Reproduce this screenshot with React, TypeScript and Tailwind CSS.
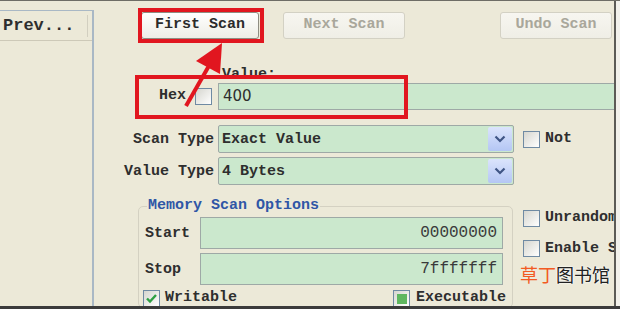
import React from 'react';

// Cheat-engine style scan panel, with the red tutorial marks on top

const mono = "font-['Liberation_Mono',monospace] font-bold";

interface CheckProps {
  state?: 'check' | 'fill';
}

const Check: React.FC<CheckProps> = ({ state }) => (
  <span className="flex h-[17px] w-[17px] shrink-0 items-center justify-center border border-[#6f8aa3] bg-linear-to-br from-[#d6d6cf] to-white">
    {state === 'check' && (
      <svg width="13" height="13" viewBox="0 0 13 13">
        <path d="M2 6.5 L5 9.5 L11 3" fill="none" stroke="#2ea043" strokeWidth="2.4" />
      </svg>
    )}
    {state === 'fill' && <span className="h-[10px] w-[10px] bg-[#5fb760]" />}
  </span>
);

const Select: React.FC<{ value: string }> = ({ value }) => (
  <div className="flex h-[28px] w-[296px] items-stretch rounded-[2px] border border-[#9ea9a6] bg-[#cbe8cd]">
    <span className="flex-1 pl-[3px] leading-[28px]">{value}</span>
    <span className="m-[1px] flex w-[24px] items-center justify-center rounded-[2px] bg-linear-to-b from-[#dbe4fc] to-[#b4c6f4]">
      <svg width="12" height="8" viewBox="0 0 12 8">
        <path d="M1.5 1.5 L6 6 L10.5 1.5" fill="none" stroke="#3f5585" strokeWidth="2.2" />
      </svg>
    </span>
  </div>
);

const Btn: React.FC<{ label: string; width: string; active?: boolean; className?: string }> = ({
  label,
  width,
  active,
  className = '',
}) => (
  <div
    className={`flex h-[27px] items-center justify-center rounded-[3px] border bg-linear-to-b ${width} ${className} ${
      active
        ? 'border-[#8f8d82] from-white to-[#eeede5] text-[#2b2b2b]'
        : 'border-[#d3d1c4] from-[#f7f6f0] to-[#efeee6] text-[#a9a79b]'
    }`}
  >
    {label}
  </div>
);

export default function App() {
  return (
    <div className={`relative h-[309px] w-[620px] overflow-hidden bg-[#ece9d8] text-[15px] text-[#2e2e2e] ${mono}`}>
      <div className="h-[1px] bg-[#6e6d66]" />

      <div className="flex h-[305px]">
        {/* left list */}
        <div className="w-[95px] shrink-0 pt-[9px]">
          <div className="h-full w-[94px] border-t border-r-[2px] border-[#a9b8c5]">
            <div className="flex h-[30px] items-center border-b border-[#cdc9b8]">
              <span className="w-[87px] pl-[3px] text-[17px]">Prev...</span>
              <span className="h-[22px] w-[1px] bg-[#d2cfc0]" />
            </div>
          </div>
        </div>

        {/* main */}
        <div className="w-[519px] shrink-0 overflow-hidden">
          <div className="mt-[11px] flex pl-[46px] pr-[2px]">
            <Btn label="First Scan" width="w-[118px]" active />
            <Btn label="Next Scan" width="w-[122px]" className="ml-[24px]" />
            <Btn label="Undo Scan" width="w-[112px]" className="ml-auto" />
          </div>

          <div className="mt-[29px] h-[14px] pl-[127px] leading-[14px]">Value:</div>

          <div className="mt-[1px] flex h-[27px]">
            <div className="flex w-[123px] items-center justify-end gap-[9px] pr-[6px]">
              <span>Hex</span>
              <Check />
            </div>
            <div className="flex flex-1 items-center border-y border-l border-[#9ea9a6] bg-[#cbe8cd] pl-[4px] font-['DejaVu_Sans',sans-serif] font-normal">
              400
            </div>
          </div>

          <div className="mt-[15px] flex h-[28px] items-center">
            <span className="w-[119px] pt-[2px] text-right">Scan Type</span>
            <div className="ml-[4px]">
              <Select value="Exact Value" />
            </div>
            <span className="ml-[9px]">
              <Check />
            </span>
            <span className="ml-[5px]">Not</span>
          </div>

          <div className="mt-[4px] flex h-[28px] items-center">
            <span className="w-[119px] pt-[2px] text-right">Value Type</span>
            <div className="ml-[4px]">
              <Select value="4 Bytes" />
            </div>
          </div>

          <div className="mt-[13px] flex">
            <fieldset className="ml-[43px] w-[375px] shrink-0 rounded-[5px] border border-[#d4d1c2] px-[6px]">
              <legend className="ml-[2px] px-[1px] leading-[16px] text-[#2f56a6]">Memory Scan Options</legend>
              <div className="mt-[3px] flex h-[32px] items-center">
                <span className="w-[55px] pt-[2px]">Start</span>
                <div className="flex h-full w-[303px] items-center justify-end border border-[#9ea9a6] bg-[#cbe8cd] pr-[5px] text-[16px] font-normal text-[#3a3a3a]">
                  00000000
                </div>
              </div>
              <div className="mt-[4px] flex h-[32px] items-center">
                <span className="w-[55px] pt-[2px]">Stop</span>
                <div className="flex h-full w-[303px] items-center justify-end border border-[#9ea9a6] bg-[#cbe8cd] pr-[5px] text-[16px] font-normal text-[#3a3a3a]">
                  7fffffff
                </div>
              </div>
              <div className="mt-[5px] ml-[-2px] flex h-[17px] items-center">
                <div className="flex w-[250px] items-center gap-[5px]">
                  <Check state="check" />
                  <span>Writable</span>
                </div>
                <div className="flex items-center gap-[6px]">
                  <Check state="fill" />
                  <span>Executable</span>
                </div>
              </div>
            </fieldset>

            <div className="ml-[10px] whitespace-nowrap pt-[9px]">
              <div className="flex items-center gap-[5px]">
                <Check />
                <span>Unrandomizer</span>
              </div>
              <div className="mt-[8px] flex items-center gap-[5px]">
                <Check />
                <span>Enable Speedhack</span>
              </div>
            </div>
          </div>
        </div>

        <div className="w-[2px] shrink-0 bg-[#5c5b56]" />
        <div className="flex-1 bg-[#f2f1eb]" />
      </div>

      <div className="h-[3px] bg-[#3b3b3b]" />

      {/* tutorial marks */}
      <div className="pointer-events-none absolute left-[138px] top-[8px] h-[35px] w-[126px] border-[4px] border-[#e1161f]" />
      <div className="pointer-events-none absolute left-[135px] top-[75px] h-[44px] w-[273px] border-[4px] border-[#e1161f]" />
      <svg className="pointer-events-none absolute left-0 top-0" width="620" height="309" viewBox="0 0 620 309">
        <line x1="186" y1="106" x2="210" y2="64" stroke="#e1161f" strokeWidth="4" />
        <polygon points="222,43 196,61 220,74" fill="#e1161f" />
      </svg>

      <div className="pointer-events-none absolute left-[520px] top-[262px] font-['Noto_Sans_CJK_SC',sans-serif] text-[18px] font-normal leading-[24px]">
        <span className="text-[#f25a22]">草丁</span>
        <span className="text-[#222] [text-shadow:0_0_2px_#fff,0_0_2px_#fff]">图书馆</span>
      </div>
    </div>
  );
}
